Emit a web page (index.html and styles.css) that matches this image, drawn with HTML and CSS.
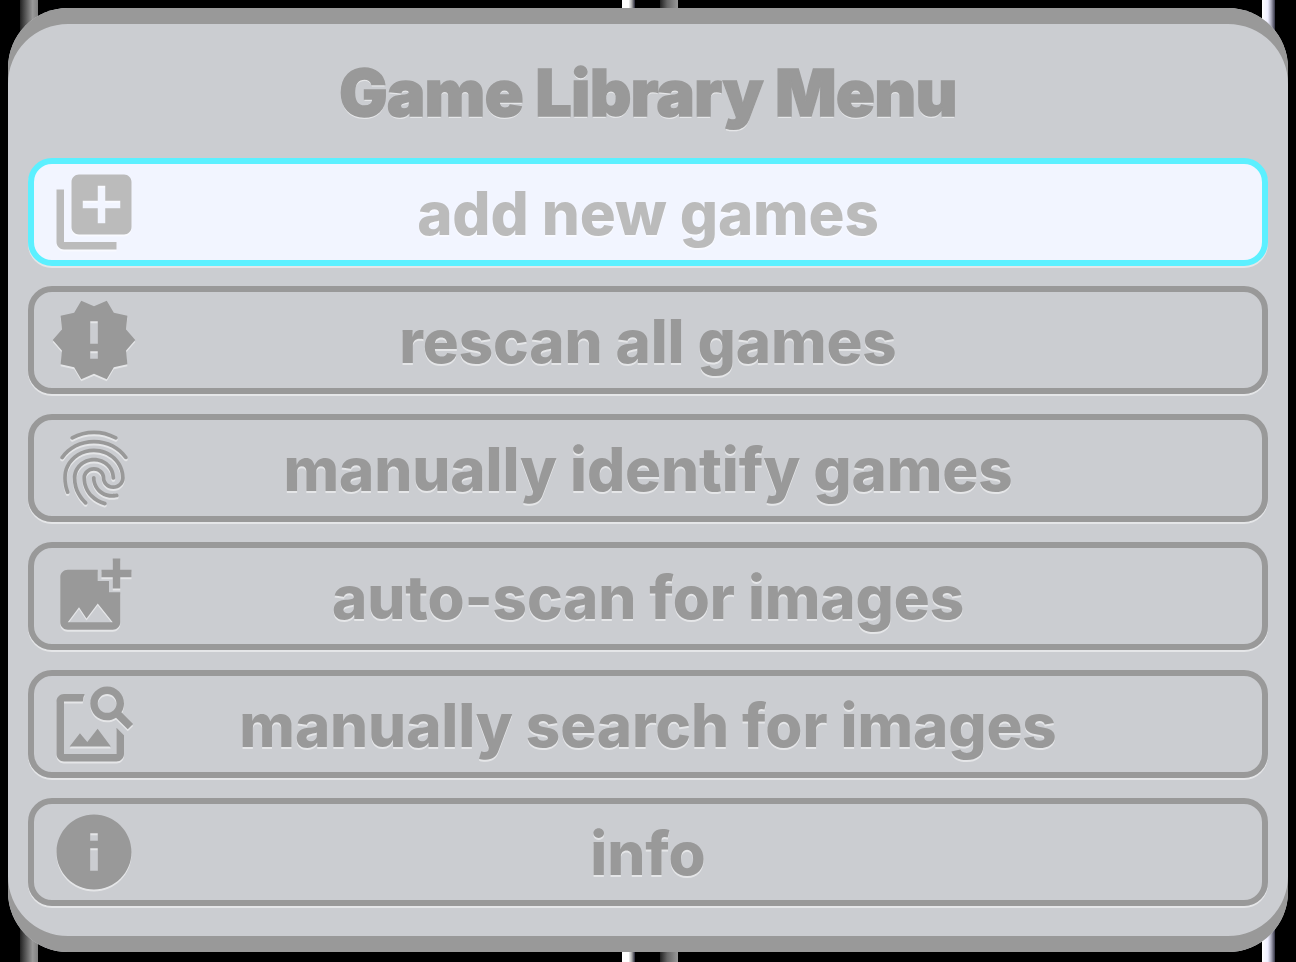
FILE: index.html
```html
<!DOCTYPE html>
<html lang="en">
<head>
<meta charset="utf-8">
<title>Game Library Menu</title>
<link rel="stylesheet" href="styles.css">
</head>
<body>
<main class="panel">
  <h1 class="title">Game Library Menu</h1>
  <ul class="menu">
    <li class="item item-active">
      <svg class="icon" viewBox="0 0 24 24"><path d="M4 6H2v14c0 1.1.9 2 2 2h14v-2H4V6zm16-4H8c-1.1 0-2 .9-2 2v12c0 1.1.9 2 2 2h12c1.1 0 2-.9 2-2V4c0-1.1-.9-2-2-2zm-1 9h-4v4h-2v-4H9V9h4V5h2v4h4v2z"/></svg>
      <span class="label">add new games</span>
    </li>
    <li class="item">
      <svg class="icon" viewBox="0 0 24 24"><path d="M23 12l-2.44-2.78.34-3.68-3.61-.82-1.89-3.18L12 3 8.6 1.54 6.71 4.72l-3.61.81.34 3.68L1 12l2.44 2.78-.34 3.69 3.61.82 1.89 3.18L12 21l3.4 1.46 1.89-3.18 3.61-.82-.34-3.68L23 12zm-10 5h-2v-2h2v2zm0-4h-2V7h2v6z"/></svg>
      <span class="label">rescan all games</span>
    </li>
    <li class="item">
      <svg class="icon" viewBox="0 0 24 24"><path d="M17.81 4.47c-.08 0-.16-.02-.23-.06C15.66 3.42 14 3 12.01 3c-1.98 0-3.86.47-5.57 1.41-.24.13-.54.04-.68-.2-.13-.24-.04-.55.2-.68C7.82 2.52 9.86 2 12.01 2c2.13 0 3.99.47 6.03 1.52.25.13.34.43.21.67-.09.18-.26.28-.44.28zM3.5 9.72c-.1 0-.2-.03-.29-.09-.23-.16-.28-.47-.12-.7.99-1.4 2.25-2.5 3.75-3.27C9.98 4.04 14 4.03 17.15 5.65c1.5.77 2.76 1.86 3.75 3.25.16.22.11.54-.12.7-.23.16-.54.11-.7-.12-.9-1.26-2.04-2.25-3.39-2.94-2.87-1.47-6.54-1.47-9.4.01-1.36.7-2.5 1.7-3.4 2.96-.08.14-.23.21-.39.21zm6.25 12.07c-.13 0-.26-.05-.35-.15-.87-.87-1.34-1.43-2.01-2.64-.69-1.23-1.05-2.73-1.05-4.34 0-2.97 2.54-5.39 5.66-5.39s5.66 2.42 5.66 5.39c0 .28-.22.5-.5.5s-.5-.22-.5-.5c0-2.42-2.09-4.39-4.66-4.39-2.57 0-4.66 1.97-4.66 4.39 0 1.44.32 2.77.93 3.85.64 1.15 1.08 1.64 1.85 2.42.19.2.19.51 0 .71-.11.1-.24.15-.37.15zm7.17-1.85c-1.19 0-2.24-.3-3.1-.89-1.49-1.01-2.38-2.65-2.38-4.39 0-.28.22-.5.5-.5s.5.22.5.5c0 1.41.72 2.74 1.94 3.56.71.48 1.54.71 2.54.71.24 0 .64-.03 1.04-.1.27-.05.53.13.58.41.05.27-.13.53-.41.58-.57.11-1.07.12-1.21.12zM14.91 22c-.04 0-.09-.01-.13-.02-1.59-.44-2.63-1.03-3.72-2.1-1.4-1.39-2.17-3.24-2.17-5.22 0-1.62 1.38-2.94 3.08-2.94 1.7 0 3.08 1.32 3.08 2.94 0 1.07.93 1.94 2.08 1.94s2.08-.87 2.08-1.94c0-3.77-3.25-6.83-7.25-6.83-2.84 0-5.44 1.58-6.61 4.03-.39.81-.59 1.76-.59 2.8 0 .78.07 2.01.67 3.61.1.26-.03.55-.29.64-.26.1-.55-.04-.64-.29-.49-1.31-.73-2.61-.73-3.96 0-1.2.23-2.29.68-3.24 1.33-2.79 4.28-4.6 7.51-4.6 4.55 0 8.25 3.51 8.25 7.83 0 1.62-1.38 2.94-3.08 2.94s-3.08-1.32-3.08-2.94c0-1.07-.93-1.94-2.08-1.94s-2.08.87-2.08 1.94c0 1.71.66 3.31 1.87 4.51.95.94 1.86 1.46 3.27 1.85.27.07.42.35.35.61-.05.23-.26.38-.47.38z"/></svg>
      <span class="label">manually identify games</span>
    </li>
    <li class="item">
      <svg class="icon" viewBox="0 0 24 24"><path d="M19 7v2.99s-1.99.01-2 0V7h-3s.01-1.99 0-2h3V2h2v3h3v2h-3zm-3 4V8h-3V5H5c-1.1 0-2 .9-2 2v12c0 1.1.9 2 2 2h12c1.1 0 2-.9 2-2v-8h-3zM5 19l3-4 2 3 3-4 4 5H5z"/></svg>
      <span class="label">auto-scan for images</span>
    </li>
    <li class="item">
      <svg class="icon" viewBox="0 0 24 24"><path d="M18 13v7H4V6h5.02c.05-.71.22-1.38.48-2H4c-1.1 0-2 .9-2 2v14c0 1.1.9 2 2 2h14c1.1 0 2-.9 2-2v-5l-2-2zm-1.5 5h-11l2.75-3.53 1.96 2.36 2.75-3.54L16.5 18zm2.8-9.11c.44-.7.7-1.51.7-2.39C20 4.01 17.99 2 15.5 2S11 4.01 11 6.5s2.01 4.5 4.49 4.5c.88 0 1.7-.26 2.39-.7L21 13.42 22.42 12 19.3 8.89zM15.5 9C14.12 9 13 7.88 13 6.5S14.12 4 15.5 4 18 5.12 18 6.5 16.88 9 15.5 9z"/></svg>
      <span class="label">manually search for images</span>
    </li>
    <li class="item">
      <svg class="icon" viewBox="0 0 24 24"><path d="M12 2C6.48 2 2 6.48 2 12s4.48 10 10 10 10-4.48 10-10S17.52 2 12 2zm1 15h-2v-6h2v6zm0-8h-2V7h2v2z"/></svg>
      <span class="label">info</span>
    </li>
  </ul>
</main>
</body>
</html>
```

FILE: styles.css
```css
* {
  box-sizing: border-box;
}

html,
body {
  margin: 0;
  height: 100%;
}

body {
  padding: 8px 8px 10px;
  background-color: #000;
  background-image:
    linear-gradient(90deg, #222 0, #555 30%, #999 70%, #808080 100%),
    linear-gradient(90deg, #fff 0, #fff 50%, #aaa 75%, #223 100%),
    linear-gradient(90deg, #222 0, #666 40%, #999 100%),
    linear-gradient(90deg, #fff 0, #eef 45%, #aab 70%, #334 100%);
  background-size: 18px 100%, 13px 100%, 18px 100%, 13px 100%;
  background-position: 20px 0, 622px 0, 660px 0, 1262px 0;
  background-repeat: no-repeat;
  font-family: Inter, "Liberation Sans", sans-serif;
}

.panel {
  display: flex;
  flex-direction: column;
  height: 944px;
  padding: 16px 20px 0;
  background: #cbcdd1;
  border-radius: 60px;
  box-shadow: inset 0 16px 0 #999, inset 0 -16px 0 #999;
}

.title {
  display: flex;
  align-items: center;
  justify-content: center;
  height: 134px;
  margin: 0;
  padding-top: 3px;
  font-size: 64px;
  font-weight: 900;
  letter-spacing: -0.4px;
  color: #999;
  -webkit-text-stroke: 1.5px #999;
  text-shadow: 0 2px 0 rgba(255, 255, 255, 0.5);
}

.menu {
  display: flex;
  flex-direction: column;
  gap: 20px;
  margin: 0;
  padding: 0;
  list-style: none;
}

.item {
  display: grid;
  grid-template-columns: 1fr auto 1fr;
  align-items: center;
  height: 108px;
  padding: 0 15px;
  border: 6px solid #999;
  border-radius: 24px;
  color: #999;
  box-shadow: 0 2px 0 rgba(255, 255, 255, 0.5);
}

.item-active {
  background: #f2f5ff;
  border-color: #5cf0ff;
  color: #bbb;
}

.icon {
  display: block;
  width: 90px;
  height: 90px;
  fill: currentColor;
  filter: drop-shadow(0 2px 0 rgba(255, 255, 255, 0.5));
}

.label {
  padding-top: 2px;
  font-size: 60px;
  font-weight: 800;
  letter-spacing: -0.1px;
  line-height: 1;
  white-space: nowrap;
  text-shadow: 0 2px 0 rgba(255, 255, 255, 0.5);
}
```
